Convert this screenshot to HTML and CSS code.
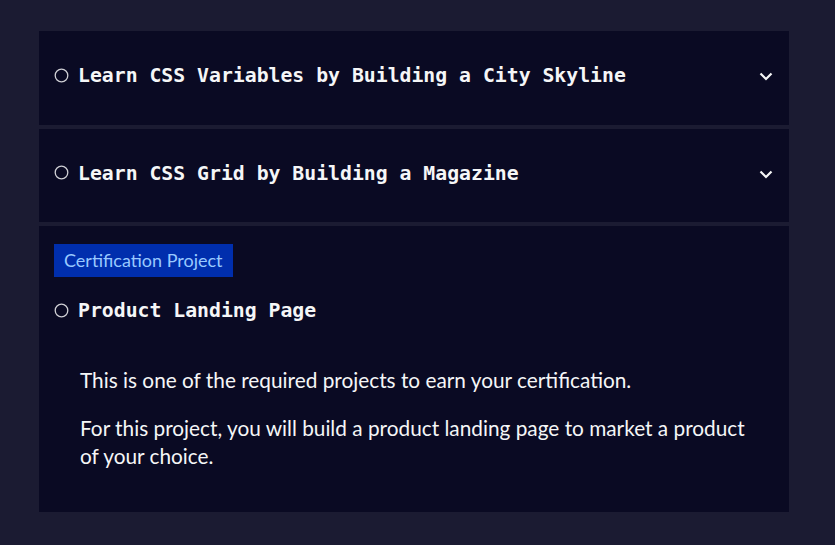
FILE: index.html
```html
<!DOCTYPE html>
<html lang="en">
<head>
<meta charset="utf-8">
<link rel="stylesheet" href="styles.css">
</head>
<body>
<main class="map">
  <div class="block">
    <button class="block-header">
      <span class="title-wrap">
        <svg class="check" width="15" height="15" viewBox="0 0 15 15"><circle cx="7.5" cy="7.5" r="6.3" fill="none" stroke="#d0d0d5" stroke-width="1.3"/></svg>
        <span class="title">Learn CSS Variables by Building a City Skyline</span>
      </span>
      <svg class="chevron" width="14" height="9" viewBox="0 0 14 9"><path d="M1.5 1.5 L7 7 L12.5 1.5" fill="none" stroke="#f5f6f7" stroke-width="2.2"/></svg>
    </button>
  </div>
  <div class="block">
    <button class="block-header">
      <span class="title-wrap">
        <svg class="check" width="15" height="15" viewBox="0 0 15 15"><circle cx="7.5" cy="7.5" r="6.3" fill="none" stroke="#d0d0d5" stroke-width="1.3"/></svg>
        <span class="title">Learn CSS Grid by Building a Magazine</span>
      </span>
      <svg class="chevron" width="14" height="9" viewBox="0 0 14 9"><path d="M1.5 1.5 L7 7 L12.5 1.5" fill="none" stroke="#f5f6f7" stroke-width="2.2"/></svg>
    </button>
  </div>
  <div class="block project">
    <span class="badge">Certification Project</span>
    <div class="title-wrap project-title">
      <svg class="check" width="15" height="15" viewBox="0 0 15 15"><circle cx="7.5" cy="7.5" r="6.3" fill="none" stroke="#d0d0d5" stroke-width="1.3"/></svg>
      <span class="title">Product Landing Page</span>
    </div>
    <div class="desc">
      <p>This is one of the required projects to earn your certification.</p>
      <p>For this project, you will build a product landing page to market a product of your choice.</p>
    </div>
  </div>
</main>
</body>
</html>
```
FILE: styles.css
```css
html, body {
  margin: 0;
  padding: 0;
  background: #1b1b32;
  height: 100%;
}
body {
  font-family: Lato, "Noto Sans", sans-serif;
  color: #f5f6f7;
}
.map {
  width: 750px;
  padding: 31px 0 0 39px;
  display: flex;
  flex-direction: column;
  gap: 4px;
}
.block {
  background: #0a0a23;
}
.block-header {
  width: 100%;
  height: 94px;
  padding: 0 15px 4px;
  border: 0;
  background: transparent;
  color: inherit;
  display: flex;
  align-items: center;
  justify-content: space-between;
  cursor: pointer;
}
.block + .block .block-header {
  height: 93px;
}
.title-wrap {
  display: flex;
  align-items: center;
  gap: 9px;
}
.check {
  flex: none;
  margin-top: -2px;
}
.title {
  font-family: "DejaVu Sans Mono", "Liberation Mono", monospace;
  font-weight: bold;
  font-size: 19.8px;
  line-height: 28px;
  color: #f5f6f7;
}
.chevron {
  margin-right: 1px;
  margin-top: 1px;
}
.project {
  padding: 18px 15px 42px;
}
.badge {
  display: inline-block;
  background: #002ead;
  color: #99c9ff;
  font-size: 18px;
  line-height: 33px;
  padding: 0 10px;
}
.project-title {
  margin-top: 20px;
}
.desc {
  padding: 41px 20px 0 26px;
}
.desc p {
  margin: 0 0 20px;
  font-size: 20.8px;
  line-height: 28px;
}
.desc p:last-child {
  margin-bottom: 0;
}
```
